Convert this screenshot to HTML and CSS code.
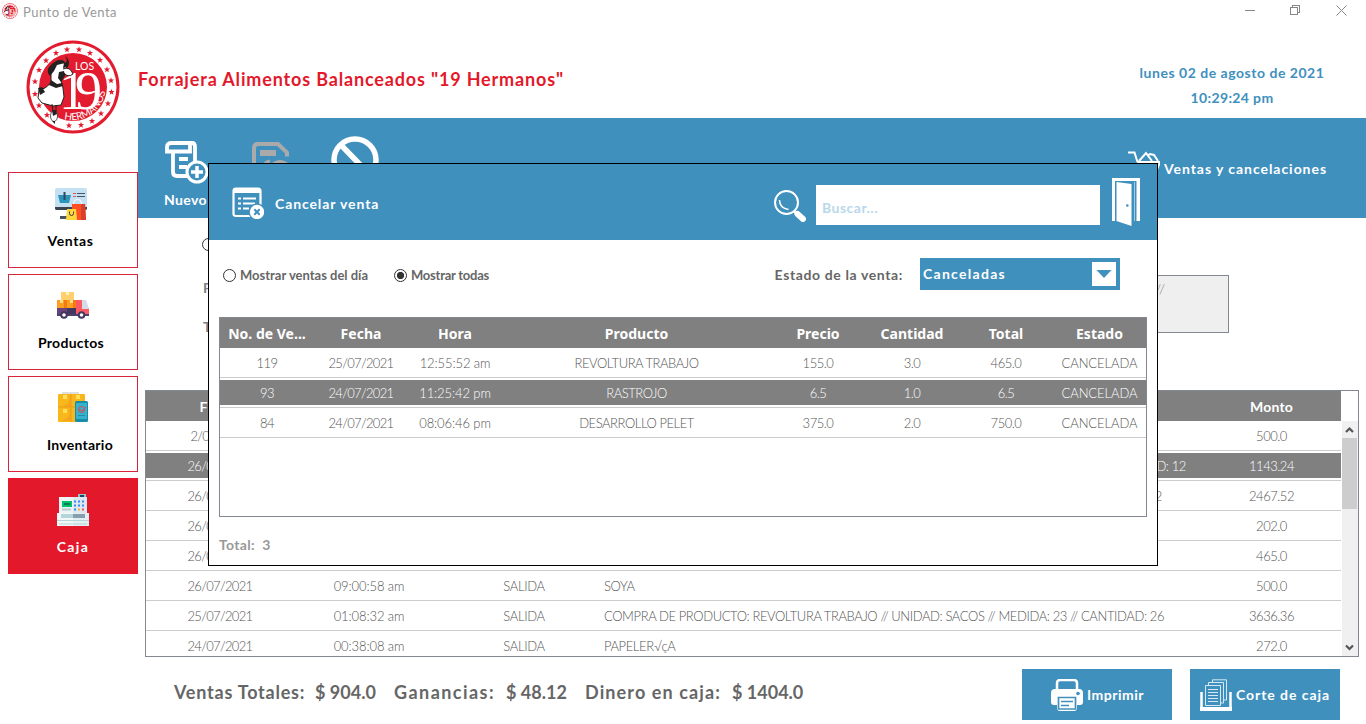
FILE: index.html
```
<!DOCTYPE html>
<html lang="es">
<head>
<meta charset="utf-8">
<title>Punto de Venta</title>
<link rel="stylesheet" href="styles.css">
</head>
<body>
<div class="titlebar">
  <svg class="app-icon" viewBox="0 0 96 96"><use href="#brand"/></svg>
  <span class="app-name">Punto de Venta</span>
  <svg class="win-controls" viewBox="0 0 116 14" shape-rendering="crispEdges">
    <path d="M5 6.500h10" stroke="#888" fill="none"/>
    <path d="M50.500 3.500h7v7h-7zM52.500 3.500v-2h7v7h-2" stroke="#888" fill="none"/>
    <path d="M96.500 1.500l10 10M106.500 1.500l-10 10" stroke="#888" fill="none" shape-rendering="auto"/>
  </svg>
</div>

<header class="header">
  <svg class="logo" viewBox="0 0 96 96">
    <g id="brand">
      <circle cx="48" cy="48" r="46.500" fill="#e31b2e"/>
      <circle cx="48" cy="48" r="43.500" fill="#fff"/>
      <circle cx="48" cy="48" r="34" fill="#e31b2e"/>
      <defs>
        <path id="star" fill="#e31b2e" d="M0-3.200.8-1h2.300L1.300.400 1.900 2.700 0 1.400-1.900 2.700-1.300.400-3.100-1H-.8z"/>
        <path id="arc" d="M39 80A33 33 0 0 0 80.500 50"/>
      </defs>
      <use href="#star" x="42" y="10.500"/><use href="#star" x="54" y="10.500"/><use href="#star" x="65" y="14"/>
      <use href="#star" x="75" y="21"/><use href="#star" x="82" y="30.500"/><use href="#star" x="86" y="41.500"/>
      <use href="#star" x="86.500" y="53"/><use href="#star" x="83" y="64.500"/><use href="#star" x="76" y="74.500"/>
      <use href="#star" x="67" y="82"/><use href="#star" x="56" y="86"/><use href="#star" x="44" y="86.500"/>
      <use href="#star" x="22" y="76"/><use href="#star" x="14" y="66.500"/>
      <use href="#star" x="10" y="55"/><use href="#star" x="10" y="42.500"/><use href="#star" x="14" y="31"/>
      <use href="#star" x="21" y="21.500"/><use href="#star" x="31" y="14"/>
      <text class="logo-los" x="50" y="31">LOS</text>
      <text class="logo-num" x="34 50" y="70">19</text>
      <text class="logo-her"><textPath href="#arc" textLength="56">HERMANOS</textPath></text>
      <path d="M26 35l3-10 8-4 5 6-3 9-3 5 2 8 1 9-3 8-8 1-11-3-4-5 1-8 6-2 6-5z" fill="#fff" stroke="#222"/>
      <path d="M38 30q7-3 10 5-5 4-9-1M31 66v7M27 65l1 8" fill="#fff" stroke="#222"/>
      <path d="M28 24l5-3 6 1 1 2-8 2-3 6-4 5q-4-4-1-9zM39 24q5-1 1-7 6 4 3 11l-5 1zM34 33l5-1 1 5-4 6-3-4zM26 41l6 4 5-1 1 3-7 2-7-3zM13 49l4-1 3 5-5 3z" fill="#222"/>
      <ellipse cx="29" cy="77" rx="3.500" ry="5.500" fill="#fff" stroke="#333" stroke-width=".8"/>
      <path d="M27 71h4l1 4-4 2zM27 82h3v3z" fill="#222"/>
    </g>
  </svg>
  <h1 class="company">Forrajera Alimentos Balanceados "19 Hermanos"</h1>
  <div class="clock"><div class="date">lunes 02 de agosto de 2021</div><div class="time">10:29:24 pm</div></div>
</header>

<div class="workspace">
  <nav class="sidebar">
    <a class="nav-card">
      <svg class="nav-icon" viewBox="0 0 32 32">
        <rect x="0" y="0" width="32" height="22" rx="2" fill="#c3e1f2"/><path d="M0 19h32v1.500q0 1.500-2 1.500H2q-2 0-2-1.500zM12 22h8v5h-8z" fill="#3b4350"/><path d="M5 28h15v3H5z" fill="#4b5362"/>
        <path d="M3 7h13l-2 8H5z" fill="#2a94bd"/><path d="M8.500 4h2v8h-2z" fill="#35465a"/>
        <path d="M18 5.500h3M18 8.500h3" stroke="#e95b43"/><path d="M22 5.500h8M22 8.500h8" stroke="#4b5362"/>
        <path d="M18.500 18v-3q0-3.500 4-3.500t4 3.500v3" stroke="#fff" fill="none"/><path d="M17 16h13l1 16H17z" fill="#ff4f23"/><path d="M26 16h4l1 16h-5z" fill="#d6412c"/>
        <path d="M12 21h9l1 11H11z" fill="#ffd83f"/><path d="M14.500 23.500v2q0 2 2 2t2-2v-2" stroke="#433b38" fill="none"/>
      </svg><span class="nav-label ventas">Ventas</span>
    </a>
    <a class="nav-card">
      <svg class="nav-icon shift-product" viewBox="0 0 32 32">
        <path d="M4 0h13v8H4z" fill="#ffd06b"/><path d="M9 0h3v3H9z" fill="#fff0be"/><path d="M0 8h10v9H0zM10 8h10v9H10z" fill="#ff9f22"/><path d="M7 8h3v9H7zM16 8h3v9h-3z" fill="#f47b12"/><path d="M3 8h3v3H3zM13 8h3v3h-3z" fill="#ffdf8d"/>
        <path d="M0 16h10v7H0z" fill="#66437d"/><path d="M10 16h10v7H10z" fill="#43365f"/><path d="M19 8h8l5 9v6H19z" fill="#ff5964"/><path d="M25 8h4l3 9h-7z" fill="#d5dce9"/><path d="M0 22h32v2H0z" fill="#51406c"/>
        <circle cx="7" cy="23" r="2.800" fill="#fff" stroke="#43365f" stroke-width="2"/><circle cx="24.500" cy="23" r="2.800" fill="#fff" stroke="#43365f" stroke-width="2"/>
      </svg><span class="nav-label productos">Productos</span>
    </a>
    <a class="nav-card">
      <svg class="nav-icon shift-stock" viewBox="0 0 32 32">
        <path d="M5 0h17v3H5z" fill="#dedede"/><rect x="1" y="2" width="27" height="28" rx="1" fill="#f9b71c"/><path d="M12 3q3 9-8 12h10V3zM26 3q1 9-9 12h10zM12 17q3 9-8 12h10V17z" fill="#f5a51f"/><path d="M1 15h27M14 2v28" stroke="#e99d17"/><path d="M6 3h4v4H6zM19 3h4v4h-4zM6 17h4v4H6z" fill="#ffe05b"/>
        <rect x="18" y="9" width="13" height="21" rx="1.500" fill="#178da8"/><rect x="19" y="11" width="11" height="16" fill="#36b2cf"/><circle cx="24.500" cy="17.500" r="3" stroke="#dc4747" fill="none"/><path d="M22 17l3 2 4-4" stroke="#dc4747" fill="none"/><path d="M21 23.500h7" stroke="#1f8da5"/>
      </svg><span class="nav-label inventario">Inventario</span>
    </a>
    <a class="nav-card active">
      <svg class="nav-icon shift-cash" viewBox="0 0 32 32">
        <path d="M21 0h8v5h-8z" fill="#9ebec7"/><path d="M23 1h4v3h-4z" fill="#184b5d"/><path d="M2 3h14v17H2z" fill="#eef3f5"/><path d="M16 3h14v17H16z" fill="#dce9f0"/><path d="M5 7h10v6H5z" fill="#00c469"/><path d="M7 9h6v2H7z" fill="#087b5a"/>
        <path d="M17 6.500h2v2h-2zM21 6.500h2v2h-2zM25 6.500h2v2h-2zM17 10.500h2v2h-2zM21 10.500h2v2h-2zM25 10.500h2v2h-2zM17 14.500h2v2h-2z" fill="#3f86f7"/><path d="M21 14.500h2v2h-2z" fill="#ffac35"/><path d="M25 14.500h2v2h-2z" fill="#f05455"/><path d="M5 15.500h9" stroke="#b3cdd2" stroke-width="2"/>
        <path d="M0 19h32v13H0z" fill="#e3eff2"/><path d="M0 19h16v13H0z" fill="#f1f8f8"/><path d="M4 20h12v4H4z" fill="#b6d5d9"/><path d="M16 20h12v4H16z" fill="#869eb0"/><path d="M0 26.500h32M2 30h28" stroke="#b6d5d9"/>
      </svg><span class="nav-label caja">Caja</span>
    </a>
  </nav>

  <main class="main">
    <div class="toolbar">
      <button class="tool tool-new">
        <svg viewBox="0 0 44 44" fill="none" stroke="#fff" stroke-width="3.800"><path d="M9 10.500H3V6q0-4 4-4h21q3 0 3 4v14M9 10V31q0 4 4 4h10M8 10.500h18V3M15 18h9M15 26h8"/><circle cx="33" cy="31" r="10" stroke-width="3"/><path d="M33 25v12M27 31h12" stroke-width="3.500"/></svg>
        <span class="new-label">Nuevo</span>
      </button>
      <svg class="tool-save" viewBox="0 0 40 44" fill="none" stroke="#aaa" stroke-width="4"><path d="M2 40V6q0-4 4-4h20l9 8.500v4"/><path d="M8 11h16" stroke-width="6"/><circle cx="28" cy="30" r="10"/><path d="M12 24q1-4 6-5" stroke-width="3"/></svg>
      <svg class="tool-cancel" viewBox="0 0 48 48" fill="none" stroke="#fff" stroke-width="5.500"><circle cx="24" cy="24" r="21"/><path d="M10 9l29 30"/></svg>
      <div class="section-title">
        <svg viewBox="0 0 32 32" fill="none" stroke="#fff" stroke-width="2"><path d="M0 2.500h6.500l3 9.500M11 11l7-8 6 8M19 6l3-2 4 1 4 6M10 12h22M10 12l3 10h15l4-10"/></svg>
        <span>Ventas y cancelaciones</span>
      </div>
    </div>

    <div class="form">
      <div class="form-labels"><i class="radio"></i><span>Fecha:</span><span>Tipo:</span></div>
      <div class="note">//</div>
    </div>

    <section class="movements">
      <div class="grid-wrap">
        <div class="mrow mhead"><span class="wide">Fecha</span><span>Hora</span><span>Tipo</span><span>Concepto</span><span>Monto</span></div>
        <div class="mrow"><span class="d short">2/08/2021</span><span></span><span></span><span></span><span class="n">500.0</span></div>
        <div class="mrow selected"><span class="d">26/07/2021</span><span></span><span></span><span class="long tail">CANTIDAD: 12</span><span class="n">1143.24</span></div>
        <div class="mrow"><span class="d">26/07/2021</span><span></span><span></span><span class="long tail near">CANTIDAD: 2</span><span class="n">2467.52</span></div>
        <div class="mrow"><span class="d">26/07/2021</span><span></span><span></span><span></span><span class="n">202.0</span></div>
        <div class="mrow"><span class="d">26/07/2021</span><span></span><span></span><span></span><span class="n">465.0</span></div>
        <div class="mrow"><span class="d">26/07/2021</span><span class="t">09:00:58 am</span><span class="k">SALIDA</span><span class="long">SOYA</span><span class="n">500.0</span></div>
        <div class="mrow"><span class="d">25/07/2021</span><span class="t">01:08:32 am</span><span class="k">SALIDA</span><span class="long">COMPRA DE PRODUCTO: REVOLTURA TRABAJO // UNIDAD: SACOS // MEDIDA: 23 // CANTIDAD: 26</span><span class="n">3636.36</span></div>
        <div class="mrow"><span class="d">24/07/2021</span><span class="t">00:38:08 am</span><span class="k">SALIDA</span><span class="long">PAPELER√çA</span><span class="n">272.0</span></div>
      </div>
      <div class="scrollbar">
        <svg viewBox="0 0 15 17"><path d="M4 11l3.500-3.500L11 11" fill="none" stroke="#555" stroke-width="2.200"/></svg>
        <div class="thumb"></div>
        <svg class="down" viewBox="0 0 15 17"><path d="M4 6.500l3.500 3.500L11 6.500" fill="none" stroke="#555" stroke-width="2.200"/></svg>
      </div>
    </section>

    <footer class="footer">
      <div class="totals">
        <span class="name t1">Ventas Totales:</span><span class="value v1">$ 904.0</span>
        <span class="name t2">Ganancias:</span><span class="value v2">$ 48.12</span>
        <span class="name t3">Dinero en caja:</span><span class="value">$ 1404.0</span>
      </div>
      <button class="action print">
        <svg viewBox="0 0 32 32" fill="none"><path d="M6 11V4q0-3 3-3h14q3 0 3 3v7" stroke="#fff" stroke-width="2.500"/><path d="M4 10h24q4 0 4 4v9q0 3-3 3h-3v3q0 3-3 3H9q-3 0-3-3v-3H3q-3 0-3-3v-9q0-4 4-4z" fill="#fff"/><path d="M7.500 18.500h17V29.500h-17z" fill="#fff"/><path d="M7.500 30V18.500h17V30z" stroke="#4090be" stroke-width="1.700"/><path d="M10 22.500h12M10 26.500h8" stroke="#4090be" stroke-width="1.600"/><circle cx="27" cy="14.500" r="1.800" fill="#4090be"/></svg>
        <span>Imprimir</span>
      </button>
      <button class="action cut">
        <svg viewBox="0 0 32 32" fill="none" stroke="#d5e9f4"><path d="M1.500 13v16M30.500 13v16" stroke="#fff" stroke-width="2.500"/><path d="M0 30h32" stroke="#fff" stroke-width="4"/><path d="M5.500 6.500h15v20h-15zM8.500 6V3.500h15V24H21M12.500 3V.8h14V21H24"/><path d="M8 10.500h10M8 13.500h10M8 16.500h10M8 19.500h10M8 22.500h10"/></svg>
        <span>Corte de caja</span>
      </button>
    </footer>
  </main>
</div>

<div class="dialog">
  <div class="dialog-head">
    <svg class="dialog-icon" viewBox="0 0 32 32" fill="none"><path d="M1.500 4q0-2.500 2.500-2.500h22q2.500 0 2.500 2.500v23q0 2-2.500 2H4q-2.500 0-2.500-2z" stroke="#fff" stroke-width="2.200"/><path d="M2 2h26v4H2z" fill="#fff"/><path d="M6 11.500h3M11 11.500h13M6 16.500h3M11 16.500h12M6 21.500h3M11 21.500h6" stroke="#fff" stroke-width="2"/><circle cx="25" cy="25" r="8.500" fill="#4090be"/><circle cx="25" cy="25" r="7.200" fill="#fff"/><path d="M22.300 22.300l5.400 5.400M27.700 22.300l-5.400 5.400" stroke="#4090be" stroke-width="2"/></svg>
    <h2 class="dialog-title">Cancelar venta</h2>
    <svg class="search-icon" viewBox="0 0 32 32" fill="none" stroke="#fff"><circle cx="12.500" cy="12.500" r="11.500" stroke-width="2"/><path d="M5.500 10q0 8 9 9.500" stroke-width="1.500"/><path d="M20 21l3 3" stroke-width="3"/><path d="M23.500 24l5.500 5" stroke-width="6" stroke-linecap="round"/></svg>
    <div class="search">Buscar...</div>
    <svg class="door" viewBox="0 0 28 48"><path d="M0 0h28v43h-3.500V3H3v40H0z" fill="#fff"/><path d="M4.500 4L19.500 6v42L4.500 43z" fill="#fff"/><path d="M22.500 4v39" stroke="#a5cbe1"/><circle cx="15.300" cy="27.500" r="1.300" fill="#4090be"/></svg>
  </div>
  <div class="filters">
    <label class="choice day"><i class="radio"></i><span>Mostrar ventas del día</span></label>
    <label class="choice all"><i class="radio on"></i><span>Mostrar todas</span></label>
    <span class="state-label">Estado de la venta:</span>
    <div class="select"><span>Canceladas</span><b class="drop"><svg viewBox="0 0 16 8"><path d="M.5 0h15L8 8z" fill="#4090be"/></svg></b></div>
  </div>
  <div class="sales">
    <div class="srow shead"><span>No. de Ve...</span><span>Fecha</span><span>Hora</span><span>Producto</span><span>Precio</span><span>Cantidad</span><span>Total</span><span>Estado</span></div>
    <div class="srow"><span class="n">119</span><span class="d">25/07/2021</span><span class="t">12:55:52 am</span><span class="p">REVOLTURA TRABAJO</span><span class="n">155.0</span><span class="n">3.0</span><span class="n">465.0</span><span class="s">CANCELADA</span></div>
    <div class="srow selected"><span class="n">93</span><span class="d">24/07/2021</span><span class="t">11:25:42 pm</span><span class="p">RASTROJO</span><span class="n">6.5</span><span class="n">1.0</span><span class="n">6.5</span><span class="s">CANCELADA</span></div>
    <div class="srow"><span class="n">84</span><span class="d">24/07/2021</span><span class="t">08:06:46 pm</span><span class="p">DESARROLLO PELET</span><span class="n">375.0</span><span class="n">2.0</span><span class="n">750.0</span><span class="s">CANCELADA</span></div>
  </div>
  <div class="count">Total:&nbsp; 3</div>
</div>
</body>
</html>
```

FILE: styles.css
```
* { box-sizing: border-box; }
body { margin: 0; width: 1366px; height: 724px; overflow: hidden; position: relative; background: #fff; font-family: Lato, "Liberation Sans", sans-serif; font-size: 14px; color: #666; }
svg { display: block; flex: none; }
button { border: 0; padding: 0; font: inherit; }
span, h1, h2 { white-space: nowrap; }

.titlebar { display: flex; align-items: center; height: 24px; padding: 0 10px 2px 2px; }
.app-icon { width: 16px; height: 16px; }
.app-name { margin-left: 5px; font-size: 13px; line-height: 16px; padding-top: 1px; letter-spacing: .47px; color: #999; }
.win-controls { width: 116px; height: 14px; margin-left: auto; }

.header { display: flex; height: 94px; padding-left: 25px; }
.logo { width: 96px; height: 96px; margin-top: 15px; }
.logo-los { font: 10.500px Lato, sans-serif; fill: #fff; }
.logo-num { font: 54px "Liberation Serif", serif; fill: #fff; }
.logo-her { font: 10px Lato, sans-serif; fill: #fff; }
.company { margin: 44px 0 0 17px; font-size: 18px; line-height: 22px; letter-spacing: .84px; color: #e3192b; }
.clock { width: 200px; margin: 38px 34px 0 auto; text-align: center; font-weight: 700; line-height: 22px; color: #4090be; }
.date { letter-spacing: .52px; }
.time { letter-spacing: .36px; margin-top: 3px; }

.workspace { display: flex; height: 606px; }
.sidebar { width: 138px; padding: 54px 0 0 8px; display: flex; flex-direction: column; gap: 6px; }
.nav-card { height: 96px; border: 1px solid #d9253a; display: flex; flex-direction: column; align-items: center; padding-top: 15px; color: #000; font-weight: 700; }
.nav-card.active { background: #e3192b; border-color: #e3192b; color: #fff; }
.nav-icon { width: 32px; height: 32px; margin-right: 4px; }
.shift-product { margin: 2px 0 -2px; }
.shift-stock, .shift-cash { margin-right: 0; }
.nav-label { line-height: 18px; margin-top: 12px; }
.ventas { letter-spacing: .61px; margin-right: 5px; }
.productos { letter-spacing: .27px; margin-right: 4px; }
.inventario { letter-spacing: .26px; margin-left: 14px; }
.caja { letter-spacing: 1.400px; }

.main { flex: 1; display: flex; flex-direction: column; min-width: 0; }
.toolbar { height: 100px; background: #4090be; display: flex; padding-left: 26px; color: #fff; font-weight: 700; }
.tool-new { background: none; color: #fff; width: 44px; display: flex; flex-direction: column; align-items: flex-start; padding-top: 23px; font-weight: 700; }
.tool-new svg { width: 44px; height: 44px; }
.new-label { letter-spacing: .39px; margin-top: 6px; line-height: 18px; }
.tool-save { width: 40px; height: 44px; margin: 24px 0 0 44px; }
.tool-cancel { width: 48px; height: 48px; margin: 18px 0 0 39px; }
.section-title { display: flex; margin: 32px 39px 0 auto; letter-spacing: .95px; line-height: 38px; }
.section-title svg { width: 32px; height: 32px; margin-right: 4px; }

.form { height: 172px; display: flex; justify-content: space-between; padding: 20px 137px 0 64px; font-weight: 700; color: #808080; }
.form-labels { display: flex; flex-direction: column; line-height: 20px; }
.form-labels span { margin: 20px 0 -1px 1px; }
.form-labels span:nth-child(2) { margin-top: 27px; }
.note { width: 140px; height: 58px; margin-top: 37px; padding: 4px 0 0 65px; border: 1px solid #828790; background: #efefef; font-size: 14px; font-weight: 300; letter-spacing: 1px; }

.movements { margin: 0 7px; height: 267px; border: 1px solid #828790; display: flex; overflow: hidden; }
.grid-wrap { width: 1195px; flex: none; }
.mrow { display: grid; grid-template-columns: 148px 150px 160px 1fr 139px; height: 30px; border-bottom: 1px solid #ccc; line-height: 30px; font-size: 13px; font-weight: 300; color: #555; text-align: center; }
.mhead { background: #808080; border: 0; color: #fff; font-weight: 700; font-size: 14px; line-height: 32px; letter-spacing: .19px; }
.wide { letter-spacing: .9px; }
.long { text-align: left; letter-spacing: -.4px; }
.tail { text-align: right; padding-right: 16px; }
.near { padding-right: 40px; }
.selected { color: #fff; background: linear-gradient(#fff 2px, #808080 2px, #808080 27px, #fff 27px); }
.d { letter-spacing: -.66px; }
.t { letter-spacing: -.1px; }
.n { letter-spacing: -.47px; }
.k { letter-spacing: -.3px; }
.short { padding-right: 1px; }
.scrollbar { width: 16px; margin: 30px 0 0 1px; background: #f0f0f0; display: flex; flex-direction: column; }
.scrollbar svg { width: 15px; height: 17px; }
.thumb { width: 15px; height: 71px; background: #cdcdcd; }
.scrollbar .down { margin-top: auto; }

.footer { flex: 1; display: flex; padding: 12px 26px 0 36px; font-weight: 700; }
.totals { flex: 1; display: flex; font-size: 18px; line-height: 47px; }
.name { letter-spacing: .78px; }
.t1 { width: 141px; }
.t2 { width: 112px; letter-spacing: 1.450px; }
.t3 { width: 147px; letter-spacing: 1.110px; }
.v1 { width: 79px; }
.v2 { width: 79px; }
.action { width: 150px; height: 51px; background: #4090be; color: #fff; display: flex; align-items: center; font-weight: 700; }
.action svg { width: 32px; height: 32px; margin-right: 4px; }
.print { padding-left: 29px; letter-spacing: .5px; }
.cut { margin-left: 18px; padding-left: 10px; letter-spacing: .94px; }

.dialog { position: absolute; left: 208px; top: 163px; width: 950px; height: 403px; border: 1px solid #000; background: #fff; }
.dialog-head { height: 76px; background: #4090be; display: flex; align-items: center; padding: 4px 17px 0 23px; color: #fff; }
.dialog-icon { width: 32px; height: 32px; margin-top: -2px; }
.dialog-title { margin: -2px auto 0 11px; font-size: 14px; letter-spacing: .9px; }
.search-icon { width: 32px; height: 32px; margin-top: 4px; }
.search { width: 284px; height: 40px; margin: 2px 12px 0 10px; padding: 6px 0 0 6px; background: #fff; color: #b9d8eb; font-weight: 700; line-height: 34px; letter-spacing: .48px; }
.door { width: 28px; height: 48px; margin-bottom: 4px; }
.filters { display: flex; align-items: center; height: 77px; padding: 0 37px 7px 14px; font-weight: 700; }
.choice { display: flex; align-items: center; gap: 4px; font-size: 13px; }
.day { width: 171px; }
.all { letter-spacing: -.24px; }
.radio { width: 13px; height: 13px; border: 1px solid #333; border-radius: 50%; display: block; flex: none; }
.on { background: radial-gradient(#333 0 3.300px, #fff 4px); }
.state-label { margin: -2px 0 0 auto; letter-spacing: .62px; }
.select { width: 200px; height: 32px; margin: -3px 0 0 17px; background: #4090be; display: flex; align-items: center; justify-content: space-between; padding: 0 4px 0 3px; color: #fff; letter-spacing: 1.280px; }
.drop { width: 24px; height: 24px; background: #fff; display: flex; align-items: center; justify-content: center; }
.drop svg { width: 16px; height: 8px; }
.sales { width: 928px; height: 200px; margin-left: 10px; border: 1px solid #828790; }
.srow { display: grid; grid-template-columns: 94px 94px 94px 269px 94px 94px 94px 93px; height: 30px; border-bottom: 1px solid #ccc; line-height: 30px; font-size: 13px; font-weight: 300; color: #555; text-align: center; }
.shead { background: #808080; border: 0; color: #fff; font: 700 14px/32px "Noto Sans", sans-serif; }
.srow.selected { color: #fff; }
.p { letter-spacing: -.45px; }
.s { letter-spacing: -.08px; }
.count { margin: 19px 0 0 10px; font-weight: 700; line-height: 18px; letter-spacing: .3px; color: #999; }
```
